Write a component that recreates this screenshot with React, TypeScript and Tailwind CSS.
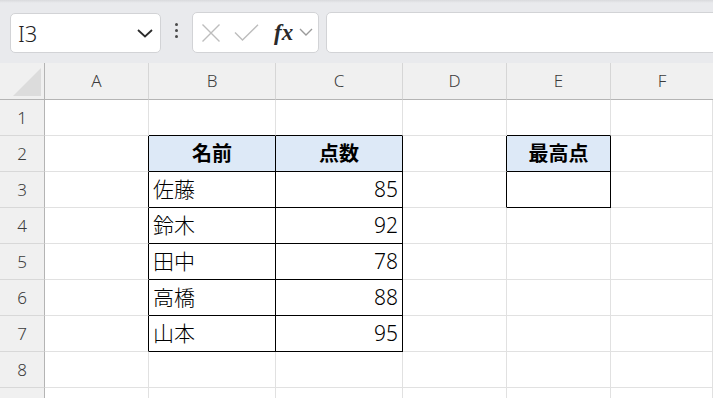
import React from "react";

const COLS = ["A", "B", "C", "D", "E", "F"];
const ROWS = [1, 2, 3, 4, 5, 6, 7, 8, 9];

type Cell = { text?: string; bold?: boolean; right?: boolean; center?: boolean; head?: boolean };

const DATA: Record<string, Cell> = {
  "2-1": { text: "名前", bold: true, center: true, head: true },
  "2-2": { text: "点数", bold: true, center: true, head: true },
  "2-4": { text: "最高点", bold: true, center: true, head: true },
  "3-1": { text: "佐藤" },
  "3-2": { text: "85", right: true },
  "4-1": { text: "鈴木" },
  "4-2": { text: "92", right: true },
  "5-1": { text: "田中" },
  "5-2": { text: "78", right: true },
  "6-1": { text: "高橋" },
  "6-2": { text: "88", right: true },
  "7-1": { text: "山本" },
  "7-2": { text: "95", right: true },
  "3-4": { text: "" },
};

function inTable(r: number, c: number) {
  if (r >= 2 && r <= 7 && (c === 1 || c === 2)) return true;
  if ((r === 2 || r === 3) && c === 4) return true;
  return false;
}

function GridCell({ r, c }: { r: number; c: number }) {
  const cell = DATA[`${r}-${c}`];
  const rightBlack = inTable(r, c) || inTable(r, c + 1);
  const bottomBlack = inTable(r, c) || inTable(r + 1, c);
  const cls = [
    "box-border h-[36px] border-r border-b flex items-center px-[4px] text-black overflow-hidden whitespace-nowrap",
    rightBlack ? "border-r-black" : "border-r-[#e1e1e1]",
    bottomBlack ? "border-b-black" : "border-b-[#e1e1e1]",
    cell?.head ? "bg-[#dde9f7]" : "bg-white",
    cell?.bold ? "font-bold text-[20px]" : "font-light text-[21px]",
    cell?.center ? "justify-center" : cell?.right ? "justify-end" : "justify-start",
  ].join(" ");
  return <div className={cls}>{cell?.text}</div>;
}

export default function App() {
  return (
    <div className="w-[713px] h-[398px] overflow-hidden bg-white" style={{ fontFamily: '"Noto Sans", "Noto Sans CJK JP", sans-serif' }}>
      {/* formula bar area */}
      <div className="relative h-[63px] bg-[#e9eaed] flex items-start">
        <div className="absolute left-0 right-0 top-0 h-[3px] bg-gradient-to-b from-[#d9dadd] to-[#e9eaed]" />
        <div className="mt-[13px] ml-[10px] w-[151px] h-[40px] box-border rounded-[5px] border border-[#d2d3d6] bg-white flex items-center pl-[7px] pr-[7px]">
          <span className="text-[22px] font-light text-[#1f1f1f] leading-none flex-1" style={{ fontFamily: '"Noto Sans", sans-serif' }}>I3</span>
          <svg width="16" height="9" viewBox="0 0 16 9" fill="none">
            <path d="M1 1 L8 7.5 L15 1" stroke="#2b2b2b" strokeWidth="1.8" />
          </svg>
        </div>
        <div className="w-[31px] h-[63px] flex flex-col items-center justify-center gap-[3px] pb-[2px]">
          <span className="w-[3px] h-[3px] rounded-full bg-[#4a4a4a]" />
          <span className="w-[3px] h-[3px] rounded-full bg-[#4a4a4a]" />
          <span className="w-[3px] h-[3px] rounded-full bg-[#4a4a4a]" />
        </div>
        <div className="mt-[12px] w-[127px] h-[41px] box-border rounded-[5px] border border-[#d2d3d6] bg-white flex items-center pl-[8px]">
          <svg width="20" height="20" viewBox="0 0 20 20" fill="none" className="mr-[13px]">
            <path d="M1.5 1.5 L18.5 18.5 M18.5 1.5 L1.5 18.5" stroke="#bdbdbd" strokeWidth="1.4" />
          </svg>
          <svg width="25" height="17" viewBox="0 0 25 17" fill="none" className="mr-[15px]">
            <path d="M1 8.5 L8.5 16 L24 0.8" stroke="#bdbdbd" strokeWidth="1.4" />
          </svg>
          <span className="text-[23px] italic font-bold text-[#2a2a2a] leading-none mr-[6px]" style={{ fontFamily: '"Liberation Serif", serif' }}>fx</span>
          <svg width="14" height="9" viewBox="0 0 14 9" fill="none">
            <path d="M1 1 L7 7 L13 1" stroke="#9a9a9a" strokeWidth="1.4" />
          </svg>
        </div>
        <div className="mt-[12px] ml-[7px] flex-1 -mr-[8px] h-[41px] box-border rounded-[5px] border border-[#d2d3d6] bg-white" />
      </div>

      {/* sheet */}
      <div className="grid grid-cols-[45px_104px_127px_127px_104px_104px_1fr]">
        {/* column header row */}
        <div className="box-border h-[37px] bg-[#f0f0f0] border-r border-r-[#b4b4b4] border-b border-b-[#b4b4b4] flex items-end justify-end pr-[3px] pb-[3px]">
          <svg width="28" height="28" viewBox="0 0 28 28">
            <path d="M28 0 L28 28 L0 28 Z" fill="#dcdcdc" />
          </svg>
        </div>
        {COLS.map((c, i) => (
          <div
            key={c}
            className={
              "box-border h-[37px] bg-[#f0f0f0] border-b border-b-[#b4b4b4] flex items-center justify-center text-[17px] font-light text-[#3b3b3b] " +
              (i < COLS.length - 1 ? "border-r border-r-[#d6d6d6]" : "")
            }
          >
            {c}
          </div>
        ))}
        {ROWS.map((r) => (
          <React.Fragment key={r}>
            <div className="box-border h-[36px] bg-[#f0f0f0] border-r border-r-[#b4b4b4] border-b border-b-[#d8d8d8] flex items-center justify-center text-[17px] font-light text-[#3b3b3b]">
              {r < 9 ? r : ""}
            </div>
            {COLS.map((_, c) => (
              <GridCell key={c} r={r} c={c} />
            ))}
          </React.Fragment>
        ))}
      </div>
    </div>
  );
}
